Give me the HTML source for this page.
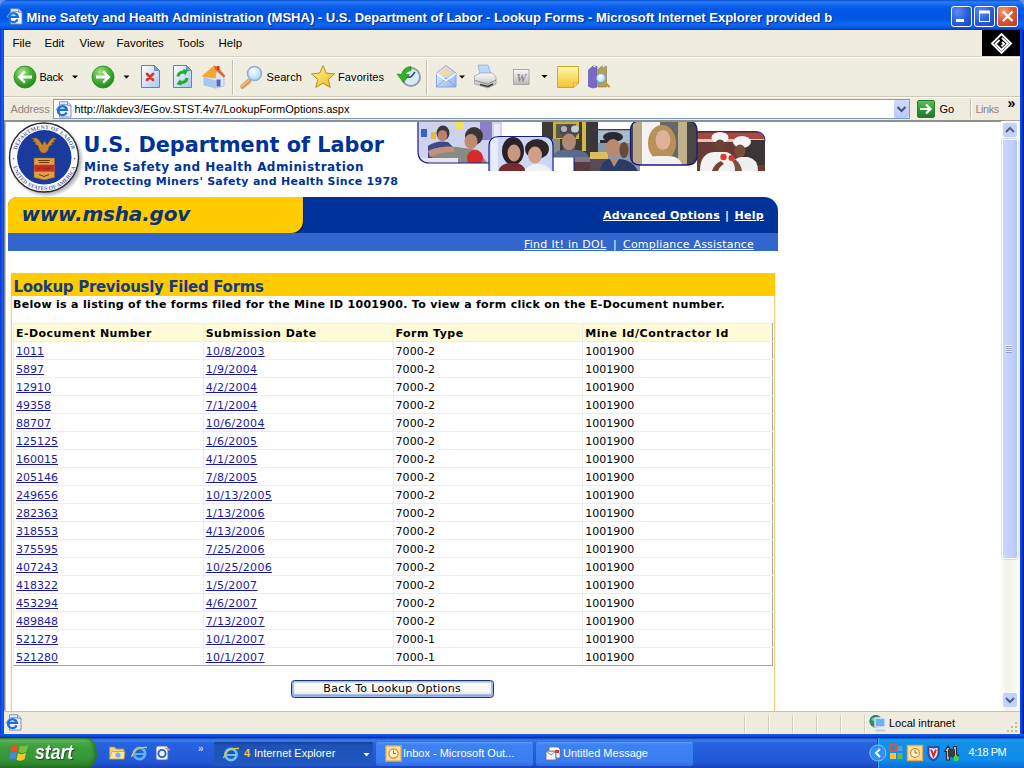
<!DOCTYPE html>
<html lang="en">
<head>
<meta charset="utf-8">
<title>Mine Safety and Health Administration (MSHA) - Lookup Forms</title>
<style>
*{box-sizing:border-box;margin:0;padding:0}
html,body{width:1024px;height:768px;overflow:hidden;background:#6f8fec}
body{position:relative;font-family:"Liberation Sans",sans-serif;font-size:11px;color:#000}
.abs{position:absolute}
/* ---------- window frame ---------- */
#titlebar{left:0;top:0;width:1024px;height:30px;
 background:linear-gradient(180deg,#0a50d0 0,#2c7cf6 2px,#1268f0 5px,#0458e6 9px,#0355e3 18px,#0a68f6 24px,#0a5fe8 27px,#0340c8 29.500px);
 border-radius:7px 7px 0 0}
#title{left:26.5px;top:9.7px;color:#fff;font-weight:bold;font-size:13px;white-space:nowrap;letter-spacing:0;text-shadow:1px 1px 1px #0a2b8c}
.tb svg{position:absolute;left:0;top:0}
.tb{top:6px;width:21px;height:21px;border:1px solid #fff;border-radius:3px;
 background:radial-gradient(circle at 30% 25%,#5c8cf0 0,#2a5fe0 50%,#1a43c4 100%)}
#bclose{background:radial-gradient(circle at 30% 25%,#f0a080 0,#dc5a34 45%,#c03a18 100%)}
#lborder{left:0;top:30px;width:4px;height:708px;background:linear-gradient(90deg,#0831d9 0,#1660e8 50%,#0a48d8 100%)}
#rborder{left:1020px;top:30px;width:4px;height:708px;background:linear-gradient(90deg,#0a48e0 0,#0a3fd0 45%,#00169a 100%)}
#bborder{left:0;top:734px;width:1024px;height:4px;background:linear-gradient(180deg,#1660e8 0,#0a48d8 60%,#0022b4 100%)}
/* ---------- menu ---------- */
#menubar{left:4px;top:30px;width:1016px;height:27px;background:#efecdd;border-bottom:1px solid #d8d2bd}
#menubar span{position:absolute;top:7px;font-size:11.5px;margin-left:-.5px}
#brand{left:982px;top:30px;width:38px;height:26px;background:#000}
/* ---------- toolbar ---------- */
#toolbar{left:4px;top:57px;width:1016px;height:40px;background:#efede0;border-top:1px solid #fff;border-bottom:1px solid #cfcab8}
.tl{top:71px;font-size:11px;white-space:nowrap;letter-spacing:.1px}
.sep{position:absolute;top:5px;width:1px;height:30px;background:#c9c5b2;border-right:1px solid #fff;width:2px}
.dd{position:absolute;width:0;height:0;border-left:3px solid transparent;border-right:3px solid transparent;border-top:3px solid #000}
/* ---------- address ---------- */
#addrbar{left:4px;top:97px;width:1016px;height:24px;background:#efebde;border-top:1px solid #fff;border-bottom:1px solid #a9a799}
#addrlbl{left:10.500px;top:103px;color:#8a8778;font-size:11px;letter-spacing:-.2px}
#addrbox{left:53px;top:99px;width:857px;height:20px;background:#fff;border:1px solid #7f9db9}
#addrtxt{left:74.5px;top:103px;font-size:11px;white-space:nowrap}
/* ---------- content ---------- */
.v{font-family:"DejaVu Sans","Liberation Sans",sans-serif}
.b{font-weight:bold}
#content{left:4px;top:120px;width:1000px;height:591px;background:#fff;overflow:hidden;border-top:2px solid #8e8f8f;border-left:2px solid #c4c4c0}
#cedge{left:4px;top:120px;width:1px;height:590px;background:#84848c}
#content .abs{white-space:nowrap}
/* coordinates inside #content are screen coords minus (6,122) -> use wrapper offsets */
#seal{left:0;top:0}
#h1{left:77.5px;top:11px;font-size:20.8px;color:#003399;letter-spacing:0}
#h2{left:78px;top:38px;font-size:12px;color:#003399;letter-spacing:.44px}
#h3{left:78px;top:53px;font-size:11px;color:#003399;letter-spacing:.27px}
#photos{left:410px;top:-2px}
#navy{left:2px;top:75px;width:770px;height:36px;background:#003399;border-radius:9px 14px 0 0}
#ybar{left:2px;top:75px;width:295px;height:36px;background:#ffcc00;border-radius:9px 0 12px 0;box-shadow:1px 1px 0 #0a1a55}
#www{left:15.5px;top:80px;font-size:20px;font-style:italic;color:#0c3278;letter-spacing:-.2px}
.nav{font-size:11px;color:#fff}
#nav1a{left:597px;top:87px;letter-spacing:.27px}#nav1b{left:719px;top:87px}#nav1c{left:728.5px;top:87px;letter-spacing:.3px}
#lblue{left:2px;top:111px;width:770px;height:18px;background:#3366cc}
#nav2a{left:518px;top:116px;letter-spacing:.27px}#nav2b{left:607px;top:116px}#nav2c{left:617px;top:116px;letter-spacing:.2px}
#ybox{left:5px;top:151px;width:764px;height:460px;border:1px solid #f1cf74;border-top:0;box-shadow:-1px 0 0 #fff4cf,1px 0 0 #fff4cf}
#yband{left:5px;top:151px;width:764px;height:23px;background:#ffcc00}
#yhead{left:7.5px;top:156px;font-size:15px;color:#173a80;letter-spacing:-.3px}
#desc{left:7px;top:176px;font-size:11px;letter-spacing:.31px}
#grid{left:7px;top:201px;width:760px;border-collapse:collapse;font-size:11px;table-layout:fixed;border-right:1px solid #999;border-bottom:1px solid #999}
#grid td,#grid th{height:18px;padding:2px 0 0 2px;text-align:left;border:1px solid #ececec;vertical-align:middle;line-height:14px;letter-spacing:0}
#grid td:nth-child(2){letter-spacing:.28px}#grid td:nth-child(3){letter-spacing:.12px}
#grid th{background:#fffbd6;letter-spacing:.45px}#grid th:nth-child(4){letter-spacing:.56px}
#grid tr:last-child td{border-bottom-color:#a3a3a3}#grid td:last-child,#grid th:last-child{border-right-color:#a4a4ae}
#grid a{color:#1a1aa6;text-decoration:underline}
#backbtn{left:284.500px;top:558px;width:203.500px;height:18px;border:1px solid #17357a;border-radius:3.500px;background:linear-gradient(180deg,#ffffff 0,#f6f6f2 60%,#e6e6de 100%);box-shadow:inset 0 0 0 1.500px #9db9f0,inset 0 -1px 1px 1.500px #6f93e0;text-align:center;font-size:11px;line-height:15px;letter-spacing:.33px}


#addrdd{left:894px;top:100px;width:15px;height:18px;background:linear-gradient(180deg,#cddafd,#b9c9f7);border-radius:2px}
#gobtn{left:917px;top:100px;width:18px;height:18px;border-radius:2px;background:linear-gradient(180deg,#5cc05c 0,#2f9a3a 50%,#1c7a2c 100%);border:1px solid #2a7a34}
#gobtn svg{position:absolute;left:-1px;top:-1px}
#gotxt{left:939.500px;top:103px;font-size:11px}
#linksep{left:970px;top:99px;width:2px;height:20px;border-left:1px solid #c5c1ae;border-right:1px solid #fff}
#linkstxt{left:975.500px;top:103px;font-size:11px;color:#8a8778;letter-spacing:-.5px}
#linkschev{left:1007.500px;top:95px;font-size:14px;font-weight:bold}
.ieico{width:17px;height:17px;z-index:5}
#ieico1{left:6px;top:8px}#ieico2{left:55px;top:100.500px}#ieico3{left:5px;top:714px}
#vscroll{left:1001px;top:121px;width:19px;height:590px;background:linear-gradient(90deg,#fdfdfb,#f2f1ea 30%,#fbfbf8)}
.sbtn{left:2px;width:14px;height:14px;background:#c4d2fb;border-radius:2px;border:0}
#thumb{left:1px;top:18px;width:15.500px;height:420px;border-radius:2px;background:linear-gradient(90deg,#c9d6fc 0,#c1cffa 70%,#b4c4f4 100%);border:1px solid #fff;box-shadow:0 0 0 .5px #b4c2ee}
#thumb i{position:absolute;left:3px;top:205px;width:6px;height:8px;background:repeating-linear-gradient(180deg,#eef2ff 0,#eef2ff 1px,#8ea2d8 1px,#8ea2d8 2px)}
#status i{position:absolute;top:3px;width:2px;height:18px;border-left:1px solid #d2cebc;border-right:1px solid #fff}
#start{left:0;top:0;width:97px;height:30px;border-radius:0 9px 9px 0/0 15px 15px 0;background:linear-gradient(180deg,#2f7a2f 0,#5cb85c 2px,#48a848 5px,#3d9d3d 10px,#389638 20px,#2e862e 26px,#226f24 30px);box-shadow:inset -3px 0 4px -1px #256a25}
#start span{position:absolute;left:34.500px;top:2.500px;color:#fff;font-size:20px;font-weight:bold;font-style:italic;text-shadow:1px 1px 1px #1a4a1a;letter-spacing:0;transform:scaleX(.88);transform-origin:0 0}
.tbtn{top:3.500px;height:24.500px;border-radius:2px;background:linear-gradient(180deg,#5a9af8 0,#3c81f3 3px,#3a7df0 20px,#2f6ae0 24px);color:#fff;font-size:11px;white-space:nowrap}
.tbtn span,.tbtn b{position:absolute;top:5px}
.tbtn.act{background:linear-gradient(180deg,#173f9a 0,#1e52b7 3px,#2058c0 24px)}
#tray{left:877px;top:0;width:147px;height:30px;background:linear-gradient(180deg,#0c5fc0 0,#1a9af6 2px,#1290e8 6px,#0f8cee 22px,#0c6cd0 30px);border-left:1px solid #0a3a9a;box-shadow:inset 1px 0 0 #3ab0ff}
/* ---------- status ---------- */
#status{left:4px;top:711px;width:1016px;height:23px;background:#efebde;border-top:1px solid #c5c2b0}
/* ---------- taskbar ---------- */
#taskbar{left:0;top:738px;width:1024px;height:30px;
 background:linear-gradient(180deg,#1941a5 0,#3a80f3 2px,#2663e0 5px,#245edc 12px,#2258d4 24px,#1a43b8 30px)}
</style>
</head>
<body>
<div id="titlebar" class="abs"></div>
<div id="title" class="abs">Mine Safety and Health Administration (MSHA) - U.S. Department of Labor - Lookup Forms - Microsoft Internet Explorer provided b</div>
<div id="bmin" class="abs tb" style="left:951px"><svg width="19" height="19"><rect x="4" y="12" width="8" height="3" fill="#fff"/></svg></div>
<div id="bmax" class="abs tb" style="left:974px"><svg width="19" height="19"><rect x="4.500" y="5" width="10" height="9.500" fill="none" stroke="#fff" stroke-width="1"/><rect x="4" y="3.500" width="11" height="3" fill="#fff"/></svg></div>
<div id="bclose" class="abs tb" style="left:997px"><svg width="19" height="19"><path d="M5 4.500 l9.500 9.500 M14.500 4.500 l-9.500 9.500" stroke="#fff" stroke-width="2.200"/></svg></div>
<div id="lborder" class="abs"></div>
<div id="rborder" class="abs"></div>
<div id="menubar" class="abs">
 <span style="left:9px">File</span><span style="left:41px">Edit</span><span style="left:76px">View</span><span style="left:113px">Favorites</span><span style="left:174px">Tools</span><span style="left:215px">Help</span>
</div>
<div id="brand" class="abs"><svg width="38" height="26" viewBox="982 30 38 26"><g fill="none" stroke="#fff" stroke-width="1.900"><path d="M1001.500 34 l9.500 9.500 l-9.500 9.500 l-9.500-9.500z"/><path d="M1002 38 l6 5.500 l-6.500 6.500 l-6-6 l4-4"/><path d="M1002 42 l2 1.800 l-2.500 2.500"/></g></svg></div>
<div id="toolbar" class="abs"></div>
<svg id="tbicons" class="abs" style="left:0;top:57px" width="1024" height="40" viewBox="0 57 1024 40">
 <defs>
  <radialGradient id="gGreen" cx="38%" cy="28%" r="75%"><stop offset="0" stop-color="#a4e484"/><stop offset=".5" stop-color="#48b636"/><stop offset="1" stop-color="#22851c"/></radialGradient>
  <linearGradient id="gPage" x1="0" y1="0" x2="1" y2="1"><stop offset="0" stop-color="#ffffff"/><stop offset="1" stop-color="#a9c4f4"/></linearGradient>
  <linearGradient id="gNote" x1="0" y1="0" x2="0" y2="1"><stop offset="0" stop-color="#fff9b0"/><stop offset="1" stop-color="#f6c22a"/></linearGradient>
  <radialGradient id="gGlass" cx="40%" cy="35%" r="70%"><stop offset="0" stop-color="#ffffff"/><stop offset="1" stop-color="#9fd4f2"/></radialGradient>
  <linearGradient id="gStar" x1="0" y1="0" x2="1" y2="1"><stop offset="0" stop-color="#fff6a0"/><stop offset="1" stop-color="#eab81a"/></linearGradient>
  <linearGradient id="gEnv" x1="0" y1="0" x2="1" y2="1"><stop offset="0" stop-color="#f4f8ff"/><stop offset="1" stop-color="#8fb4ec"/></linearGradient>
  <linearGradient id="gGrey" x1="0" y1="0" x2="0" y2="1"><stop offset="0" stop-color="#fafafa"/><stop offset="1" stop-color="#b9b9b9"/></linearGradient>
 </defs>
 <!-- back -->
 <circle cx="25" cy="77" r="11" fill="url(#gGreen)" stroke="#2a8a22" stroke-width=".8"/>
 <path d="M17.500 77 l6.500-6.500 l1.800 1.800 l-3.200 3.200 h9.400 v3 h-9.400 l3.200 3.200 l-1.800 1.800z" fill="#fff"/>
 <path d="M72 75.500 h6 l-3 3z" fill="#000"/>
 <!-- forward -->
 <circle cx="103" cy="77" r="11" fill="url(#gGreen)" stroke="#2a8a22" stroke-width=".8"/>
 <path d="M110.500 77 l-6.500-6.500 l-1.800 1.800 l3.200 3.200 h-9.400 v3 h9.400 l-3.200 3.200 l1.800 1.800z" fill="#fff"/>
 <path d="M123.500 75.500 h6 l-3 3z" fill="#000"/>
 <!-- stop -->
 <path d="M141.500 65.500 h13 l5 5 v17 h-18z" fill="url(#gPage)" stroke="#5f7fc6" stroke-width="1"/>
 <path d="M154.500 65.500 v5 h5z" fill="#7f9fe0" stroke="#5f7fc6" stroke-width=".8"/>
 <path d="M147 74 l6 6 M153 74 l-6 6" stroke="#e2311d" stroke-width="2.800" stroke-linecap="round"/>
 <!-- refresh -->
 <path d="M173.500 65.500 h13 l5 5 v17 h-18z" fill="url(#gPage)" stroke="#5f7fc6" stroke-width="1"/>
 <path d="M186.500 65.500 v5 h5z" fill="#7f9fe0" stroke="#5f7fc6" stroke-width=".8"/>
 <path d="M178 76.500 a4.800 4.800 0 0 1 7.500-3.500" fill="none" stroke="#1fae2a" stroke-width="3"/><path d="M183 69 l5.500 1.200 l-3.500 5z" fill="#1fae2a"/>
 <path d="M187 78 a4.800 4.800 0 0 1 -7.500 3.500" fill="none" stroke="#1fae2a" stroke-width="3"/><path d="M182 85.500 l-5.500-1.200 l3.500-5z" fill="#1fae2a"/>
 <!-- home -->
 <path d="M204 77 l11-8 l9 8 v9 l-8 2 l-12-3z" fill="#dbe8fb" stroke="#9bb4de" stroke-width=".7"/>
 <path d="M204 77 l12 3.500 v8 l-12-3.500z" fill="#a9c6f2"/>
 <path d="M201.500 76.500 l12.500-11 l3.500 1.500 l-2 11.500z" fill="#f2a436"/><path d="M214 65.500 l3.500 1.500 l8 9 l-2 1.500 l-8.500-8z" fill="#e06a2a"/>
 <rect x="217" y="66" width="2.500" height="4" fill="#c8382a"/>
 <rect x="216.500" y="79.500" width="4" height="7" fill="#4f66b6"/>
 <!-- sep -->
 <path d="M232.500 60 v35" stroke="#c5c1ae" stroke-width="1"/><path d="M233.500 60 v35" stroke="#fff" stroke-width="1"/>
 <!-- search -->
 <path d="M249 81 l-6.500 5.500" stroke="#dc9a58" stroke-width="4.600" stroke-linecap="round"/><path d="M249 80 l-7.500 6.500" stroke="#f0c08a" stroke-width="1.400" stroke-linecap="round"/>
 <circle cx="254.500" cy="73.500" r="7" fill="url(#gGlass)" stroke="#8fb0d4" stroke-width="1.600"/>
 <!-- favorites star -->
 <path d="M323 65.500 l3.300 7.600 l8.200.800 l-6.200 5.500 l1.900 8.100 l-7.200-4.300 l-7.200 4.300 l1.900-8.100 l-6.200-5.500 l8.200-.800z" fill="url(#gStar)" stroke="#b8901a" stroke-width="1" stroke-linejoin="round"/>
 <!-- history -->
 <circle cx="411" cy="77" r="9" fill="#d8ecf8" stroke="#9a9aa6" stroke-width="2"/>
 <path d="M411 77 l4-5 M411 77 h-4" stroke="#2a3a6a" stroke-width="1.400"/>
 <path d="M411 66.500 a10.500 10.500 0 0 0 -9.500 8 l-4.500-.5 l6.500 8.500 l6-8 l-4-.3 a6.500 6.500 0 0 1 5.500-3.700z" fill="#35b02a" stroke="#1f8a1a" stroke-width=".7"/>
 <!-- sep -->
 <path d="M426.500 60 v35" stroke="#c5c1ae" stroke-width="1"/><path d="M427.500 60 v35" stroke="#fff" stroke-width="1"/>
 <!-- mail -->
 <path d="M436.500 73 l9.500-7.500 l10 7.500 v14 h-19.500z" fill="url(#gEnv)" stroke="#7f9fd8" stroke-width=".9"/>
 <path d="M438.500 73 l7.500-5.500 l8 5.500 l-8 3z" fill="#f6d6a6"/>
 <path d="M436.500 87 l9.500-9 l10 9" fill="none" stroke="#7f9fd8" stroke-width=".9"/><path d="M436.500 73.500 l9.500 7 l10-7" fill="none" stroke="#ffffff" stroke-width="1.200"/>
 <path d="M459 75.500 h6 l-3 3z" fill="#000"/>
 <!-- print -->
 <path d="M478 65 h10 l3 9 h-11z" fill="#bcd8f8" stroke="#8aa8d8" stroke-width=".7"/>
 <path d="M474.500 76 l6-3 h12 l3.500 4 v7 l-8 4 l-13.500-4z" fill="url(#gGrey)" stroke="#9a9a9a" stroke-width=".7"/>
 <path d="M475 80.500 l13 3.500 l8-4" fill="none" stroke="#7a7a7a" stroke-width=".8"/><path d="M480 84.500 l8 2 l5-2.500" stroke="#3a3a3a" stroke-width="1.400" fill="none"/>
 <!-- W -->
 <rect x="513.500" y="69.500" width="15.500" height="15" fill="url(#gGrey)" stroke="#a8a8a8" stroke-width="1"/>
 <text x="521.300" y="81.500" font-family="Liberation Serif,serif" font-style="italic" font-weight="bold" font-size="11.500" text-anchor="middle" fill="#8a8a8a">W</text>
 <path d="M541.500 75 h6 l-3 3z" fill="#000"/>
 <!-- note -->
 <path d="M557.500 66.500 h21 v16.500 l-5 4.500 h-16z" fill="url(#gNote)" stroke="#d2a628" stroke-width="1"/>
 <path d="M578.500 83 h-5 v4.500z" fill="#fbe38a" stroke="#d2a628" stroke-width=".8"/>
 <!-- research books -->
 <path d="M588.500 70 l5-4.500 l3.500 1 v20.500 l-4 1 l-4.500-1.500z" fill="#7a68c8" stroke="#5a4aa0" stroke-width=".6"/>
 <path d="M598 69.500 l4.500-4 l4 1 v20.500 h-8.500z" fill="#b0a25a" stroke="#7e7440" stroke-width=".6"/>
 <path d="M593.500 66 l2 .5 M602.500 66 l2 .5" stroke="#fff" stroke-width="1.600"/>
 <path d="M604.500 82 l4.500 4.500" stroke="#c89a3a" stroke-width="2.400" stroke-linecap="round"/>
 <circle cx="601" cy="78" r="4.600" fill="url(#gGlass)" stroke="#7f9fc8" stroke-width="1.300"/>
</svg>
<div class="abs tl" style="left:39.500px;letter-spacing:-.25px">Back</div><div class="abs tl" style="left:266.500px">Search</div><div class="abs tl" style="left:338px">Favorites</div>
<div id="addrbar" class="abs"></div>
<div id="addrlbl" class="abs">Address</div>
<div id="addrbox" class="abs"></div>
<div id="addrtxt" class="abs">http://lakdev3/EGov.STST.4v7/LookupFormOptions.aspx</div>
<div id="addrdd" class="abs"><svg width="15" height="18" viewBox="0 0 15 18"><path d="M3.500 7 l4 4 l4-4" fill="none" stroke="#3f5382" stroke-width="2"/></svg></div>
<div id="gobtn" class="abs"><svg width="18" height="18" viewBox="0 0 18 18"><path d="M3 9 h10 M9 4.500 l4.500 4.500 l-4.500 4.500" fill="none" stroke="#fff" stroke-width="2.200"/></svg></div>
<div id="gotxt" class="abs">Go</div>
<div id="linksep" class="abs"></div>
<div id="linkstxt" class="abs">Links</div>
<div id="linkschev" class="abs">&raquo;</div>
<div id="ieico1" class="abs ieico"><svg width="17" height="17" viewBox="0 0 17 17"><path d="M4.500 .8 h8 l3.500 3.500 v11.800 h-11.500z" fill="#eef1fb" stroke="#6f86bd" stroke-width=".9"/><path d="M12.500 .8 v3.500 h3.500" fill="#cdd7f2" stroke="#6f86bd" stroke-width=".8"/><path d="M11.600 11.500 a4.500 4.500 0 1 1 .3-2.700 h-8" fill="none" stroke="#1f6fd6" stroke-width="2.300"/><path d="M.8 9.500 q4-8.500 11.500-5.500" fill="none" stroke="#5aa8f2" stroke-width="1.100"/></svg></div>
<div id="ieico2" class="abs ieico"><svg width="17" height="17" viewBox="0 0 17 17"><path d="M4.500 .8 h8 l3.500 3.500 v11.800 h-11.500z" fill="#eef1fb" stroke="#6f86bd" stroke-width=".9"/><path d="M12.500 .8 v3.500 h3.500" fill="#cdd7f2" stroke="#6f86bd" stroke-width=".8"/><path d="M11.600 11.500 a4.500 4.500 0 1 1 .3-2.700 h-8" fill="none" stroke="#1f6fd6" stroke-width="2.300"/><path d="M.8 9.500 q4-8.500 11.500-5.500" fill="none" stroke="#5aa8f2" stroke-width="1.100"/></svg></div>
<div id="ieico3" class="abs ieico"><svg width="17" height="17" viewBox="0 0 17 17"><path d="M4.500 .8 h8 l3.500 3.500 v11.800 h-11.500z" fill="#eef1fb" stroke="#6f86bd" stroke-width=".9"/><path d="M12.500 .8 v3.500 h3.500" fill="#cdd7f2" stroke="#6f86bd" stroke-width=".8"/><path d="M11.600 11.500 a4.500 4.500 0 1 1 .3-2.700 h-8" fill="none" stroke="#1f6fd6" stroke-width="2.300"/><path d="M.8 9.500 q4-8.500 11.500-5.500" fill="none" stroke="#5aa8f2" stroke-width="1.100"/></svg></div>
<div id="content" class="abs">
 <svg id="seal" class="abs" width="80" height="78" viewBox="0 0 80 78">
  <defs>
   <radialGradient id="sh" cx="50%" cy="50%" r="50%"><stop offset="80%" stop-color="#000" stop-opacity=".45"/><stop offset="100%" stop-color="#000" stop-opacity="0"/></radialGradient>
   <path id="arcT" d="M 9.9 35.5 A 28.4 28.4 0 0 1 66.7 35.5"/>
   <path id="arcB" d="M 5.6 35.5 A 32.7 32.7 0 0 0 71 35.5"/>
  </defs>
  <ellipse cx="40.5" cy="38.5" rx="37.5" ry="37" fill="url(#sh)"/>
  <circle cx="38" cy="35.5" r="34.500" fill="#fdfdfd" stroke="#2a2a36" stroke-width="1.400"/>
  <circle cx="38.3" cy="35.3" r="27.2" fill="#1b3a9e"/>
  <text font-family="Liberation Serif,serif" font-size="5.6" font-weight="bold" fill="#5a6aa6" letter-spacing=".25"><textPath href="#arcT" startOffset="50%" text-anchor="middle">DEPARTMENT OF LABOR</textPath></text>
  <text font-family="Liberation Serif,serif" font-size="5.6" font-weight="bold" fill="#5a6aa6" letter-spacing=".1"><textPath href="#arcB" startOffset="50%" text-anchor="middle">UNITED STATES OF AMERICA</textPath></text>
  <circle cx="7.6" cy="36.5" r=".8" fill="#5a6aa6"/><circle cx="68.6" cy="36.5" r=".8" fill="#5a6aa6"/>
  <!-- eagle -->
  <path d="M27 16.5 q3-2 5.5 1 q2 2.5 4 5.5 l1.5-3.5 l1.2 0 l1.5 3.5 q2-3 4-5.500 q2.500-3 5.500-1 q-1 1.500-3 2 q1 .500 1.500 1.500 q-2 .500-3 1 q.500 1 .500 2 q-2 0-3 1.500 q-.500 3-2 5 q-1.500 1.500-3 1.500 l-1.500 0 q-2-.500-3-2.500 q-1-2-1.500-4.500 q-1-1.500-3-1.500 q0-1 .500-2 q-1-.500-3-1 q.500-1 1.500-1.500 q-2-.500-3-2z" fill="#c8862a" stroke="#7a4a16" stroke-width=".5"/>
  <!-- shield -->
  <path d="M28 36 h20.600 v19.500 l-10.300 2.500 l-10.300-2.500z" fill="#e0a040" stroke="#8a5a1a" stroke-width=".5"/>
  <rect x="28.200" y="42.800" width="20.200" height="6.800" fill="#cc2a2a"/>
  <path d="M32 38.500 h12 M33 40.500 h10 M31 46.200 h4 M37 46.200 h8 M33 52.500 l5 2 l5-2" stroke="#6a3a12" stroke-width="1" fill="none"/>
 </svg>
 <div id="h1" class="abs v b">U.S. Department of Labor</div>
 <div id="h2" class="abs v b">Mine Safety and Health Administration</div>
 <div id="h3" class="abs v b">Protecting Miners' Safety and Health Since 1978</div>
 <svg id="photos" class="abs" width="352" height="52" viewBox="416 120 352 52">
  <defs>
   <filter id="pb" x="-5%" y="-5%" width="110%" height="110%"><feGaussianBlur stdDeviation=".7"/></filter>
   <clipPath id="c1"><path d="M418 121 H502 V163 H430 Q418 163 418 151z"/></clipPath>
   <clipPath id="c2"><path d="M489 171 V146 Q489 136.500 499 136.500 H543 Q553 136.500 553 146 V171z"/></clipPath>
   <clipPath id="c3"><path d="M542 121 H597.500 V148 Q597.500 157.500 588 157.500 H542z"/></clipPath>
   <clipPath id="c5"><path d="M590 121 H598 V129.500 H640 V171 H590z"/></clipPath>
   <clipPath id="c6"><path d="M630.500 131 Q630.500 121 640 121 H687 Q697 121 697 131 V155 Q697 165 687 165 H640 Q630.500 165 630.500 155z"/></clipPath>
   <clipPath id="c7"><path d="M697 131.500 H755 Q765 131.500 765 141 V171 H697z"/></clipPath>
  </defs>
  <!-- 1 kids -->
  <g clip-path="url(#c1)"><g filter="url(#pb)">
   <rect x="418" y="121" width="84" height="42" fill="#cfd2ec"/>
   <rect x="421" y="129" width="6" height="8" fill="#3a62c8"/><rect x="431" y="132" width="5" height="7" fill="#e8b83a"/>
   <rect x="455" y="121" width="9" height="8" fill="#f0e060"/><rect x="480" y="122" width="12" height="18" fill="#8a80c8"/>
   <rect x="494" y="124" width="6" height="12" fill="#e8ecf4"/>
   <ellipse cx="443" cy="133" rx="6.500" ry="7.500" fill="#3a3438"/><ellipse cx="442.500" cy="135.500" rx="4.800" ry="5.500" fill="#b8806a"/>
   <path d="M428 146 q8-6 20-4 l6 6 v12 h-26z" fill="#3a4a8a"/>
   <ellipse cx="474" cy="136" rx="9" ry="9" fill="#3e3636"/><ellipse cx="471" cy="141.500" rx="6.500" ry="7.500" fill="#c08a70"/>
   <path d="M430 150 q14-6 34-2 l14 2 l10 14 h-40 q-10-2-18-8z" fill="#8a8a84"/>
   <path d="M428 151 q12-5 26-4 l0 5 q-14 0-24 5z" fill="#c49078"/>
   <circle cx="475" cy="158" r="8" fill="#d42a2a"/>
   <rect x="418" y="158" width="40" height="5" fill="#e8e4ec"/>
  </g></g>
  <path d="M418 121 V151 Q418 163 430 163 H502" fill="none" stroke="#1a1a8c" stroke-width="1.200"/>
  <!-- 3 miner -->
  <g clip-path="url(#c3)"><g filter="url(#pb)">
   <rect x="542" y="121" width="56" height="37" fill="#3c3a34"/>
   <rect x="553" y="121" width="26" height="18" fill="#c8b040"/><rect x="556" y="124" width="20" height="14" fill="#5a5a4a"/>
   <rect x="582" y="121" width="4" height="30" fill="#d0b84a"/>
   <rect x="552" y="139" width="8" height="18" fill="#8a8c8a"/>
   <ellipse cx="569.500" cy="131" rx="10" ry="6.500" fill="#4a4a50"/><ellipse cx="575" cy="129" rx="4" ry="3.500" fill="#c8ccd4"/><ellipse cx="564" cy="129" rx="3" ry="3" fill="#b0b4bc"/>
   <ellipse cx="569" cy="142" rx="7" ry="8.500" fill="#b08a72"/><path d="M562.500 146 q6.500 10 13 0 l-1 6 h-11z" fill="#6a5a4c"/>
   <path d="M553 158 q2-8 10-8 h14 q10 0 12 8z" fill="#5a6a8c"/>
  </g></g>
  <!-- 4 box under miner -->
  <rect x="574" y="157" width="26" height="14" fill="#5a3a40"/><rect x="574" y="157" width="26" height="5" fill="#7a7a84"/>
  <path d="M574 171 V157" stroke="#1a1a8c" stroke-width="1"/>
  <!-- 5 girl with cap -->
  <g clip-path="url(#c5)"><g filter="url(#pb)"><rect x="590" y="129.500" width="50" height="41.500" fill="#8a97aa"/>
  <rect x="590" y="121" width="8" height="36" fill="#3a3638"/>
  <rect x="598" y="131" width="32" height="12" fill="#a8bcd0"/>
  <rect x="590" y="152" width="18" height="7" fill="#d8c060"/><rect x="590" y="159" width="20" height="12" fill="#5a4a58"/>
  <ellipse cx="613" cy="137" rx="10" ry="5" fill="#2a2a30"/><path d="M600 140 h14 v3 h-14z" fill="#2a2a30"/>
  <ellipse cx="613" cy="148" rx="7.500" ry="9" fill="#b88a70"/>
  <ellipse cx="624" cy="150" rx="4.500" ry="8" fill="#6a4a38"/>
  <path d="M600 171 q2-12 12-12 h6 q14 0 20 12z" fill="#2a3a6a"/><path d="M610 159 l4 8 l5-8z" fill="#b88a70"/></g></g>
  <path d="M590 129.500 H631" stroke="#2a3a9c" stroke-width="1"/>
  <!-- 2 two women -->
  <g clip-path="url(#c2)"><g filter="url(#pb)">
   <rect x="489" y="136" width="64" height="36" fill="#cdd6f2"/>
   <rect x="491" y="138" width="7" height="33" fill="#e8ecf8"/>
   <ellipse cx="513" cy="151" rx="11" ry="14" fill="#2a2226"/><ellipse cx="514" cy="153" rx="6.500" ry="8.500" fill="#c89880"/>
   <ellipse cx="537" cy="149" rx="12" ry="10" fill="#2e2628"/><ellipse cx="535" cy="155" rx="7" ry="8.500" fill="#cfa088"/>
   <path d="M498 172 q2-10 16-9 q10 0 12 9z" fill="#7a2a2e"/>
   <path d="M524 172 q4-9 14-8 q10 0 14 8z" fill="#f0f0f4"/>
  </g></g>
  <path d="M489 171 V146 Q489 136.500 499 136.500 H543 Q553 136.500 553 146 V171" fill="none" stroke="#1a1a8c" stroke-width="1.200"/>
  <!-- 7 chefs -->
  <g clip-path="url(#c7)"><g filter="url(#pb)">
   <rect x="697" y="131" width="68" height="40" fill="#6a3a34"/>
   <rect x="697" y="133" width="68" height="6" fill="#a84a40"/><rect x="697" y="139" width="68" height="3" fill="#d8c8b8"/>
   <rect x="740" y="140" width="25" height="25" fill="#3a3434"/>
   <ellipse cx="720" cy="137.500" rx="8.500" ry="5.500" fill="#f4f4f4"/><ellipse cx="720" cy="146" rx="5.500" ry="6.500" fill="#6a4232"/>
   <ellipse cx="742" cy="142" rx="9" ry="6" fill="#f4f4f4"/><ellipse cx="740" cy="151" rx="5.500" ry="6.500" fill="#7a4e3a"/>
   <path d="M700 171 q0-18 14-19 h12 q10 2 12 19z" fill="#f2f2f2"/>
   <path d="M730 171 q2-14 12-14 h6 q10 2 10 14z" fill="#eeeeee"/>
   <path d="M712 171 q2-7 9-10 l3 3 q-5 3-6 7z" fill="#6e4636"/><path d="M735 171 q0-7 -3-10 l3-2 q6 5 7 12z" fill="#7a5240"/>
   <circle cx="723.500" cy="157" r="3.200" fill="#e03a2a"/><circle cx="731.500" cy="158" r="3" fill="#d83428"/>
  </g></g>
  <path d="M697 131.500 H755 Q765 131.500 765 141" fill="none" stroke="#2a2a9c" stroke-width="1"/>
  <!-- 6 blonde woman -->
  <g clip-path="url(#c6)"><g filter="url(#pb)">
   <rect x="630" y="121" width="67" height="44" fill="#4a4644"/>
   <rect x="633" y="121" width="9" height="44" fill="#b8a888"/><rect x="642" y="121" width="20" height="44" fill="#f4f2ee"/>
   <rect x="678" y="121" width="9" height="44" fill="#c0b090"/><rect x="660" y="121" width="18" height="44" fill="#6a6660"/>
   <ellipse cx="662" cy="143" rx="14" ry="18" fill="#b8905a"/>
   <ellipse cx="663" cy="140" rx="7.500" ry="10" fill="#e0b098"/>
   <path d="M644 165 q2-9 14-9 h10 q12 0 14 9z" fill="#f4f2f0"/>
  </g></g>
  <path d="M630.500 131 Q630.500 121 640 121 H687 Q697 121 697 131 V155 Q697 165 687 165 H640 Q630.500 165 630.500 155z" fill="none" stroke="#1a1a7c" stroke-width="1.300"/>
 </svg>
 <div id="navy" class="abs"></div>
 <div id="ybar" class="abs"></div>
 <div id="www" class="abs v b">www.msha.gov</div>
 <div id="nav1a" class="abs v b nav"><u>Advanced Options</u></div><div id="nav1b" class="abs v b nav">|</div><div id="nav1c" class="abs v b nav"><u>Help</u></div>
 <div id="lblue" class="abs"></div>
 <div id="nav2a" class="abs v nav"><u>Find It! in DOL</u></div><div id="nav2b" class="abs v nav">|</div><div id="nav2c" class="abs v nav"><u>Compliance Assistance</u></div>
 <div id="ybox" class="abs"></div><div id="yband" class="abs"></div>
 <div id="yhead" class="abs v b">Lookup Previously Filed Forms</div>
 <div id="desc" class="abs v b">Below is a listing of the forms filed for the Mine ID 1001900. To view a form click on the E-Document number.</div>
 <table id="grid" class="abs v" cellspacing="0">
  <tr class="hd"><th>E-Document Number</th><th>Submission Date</th><th>Form Type</th><th>Mine Id/Contractor Id</th></tr>
  <tr><td><a>1011</a></td><td><a>10/8/2003</a></td><td>7000-2</td><td>1001900</td></tr>
  <tr><td><a>5897</a></td><td><a>1/9/2004</a></td><td>7000-2</td><td>1001900</td></tr>
  <tr><td><a>12910</a></td><td><a>4/2/2004</a></td><td>7000-2</td><td>1001900</td></tr>
  <tr><td><a>49358</a></td><td><a>7/1/2004</a></td><td>7000-2</td><td>1001900</td></tr>
  <tr><td><a>88707</a></td><td><a>10/6/2004</a></td><td>7000-2</td><td>1001900</td></tr>
  <tr><td><a>125125</a></td><td><a>1/6/2005</a></td><td>7000-2</td><td>1001900</td></tr>
  <tr><td><a>160015</a></td><td><a>4/1/2005</a></td><td>7000-2</td><td>1001900</td></tr>
  <tr><td><a>205146</a></td><td><a>7/8/2005</a></td><td>7000-2</td><td>1001900</td></tr>
  <tr><td><a>249656</a></td><td><a>10/13/2005</a></td><td>7000-2</td><td>1001900</td></tr>
  <tr><td><a>282363</a></td><td><a>1/13/2006</a></td><td>7000-2</td><td>1001900</td></tr>
  <tr><td><a>318553</a></td><td><a>4/13/2006</a></td><td>7000-2</td><td>1001900</td></tr>
  <tr><td><a>375595</a></td><td><a>7/25/2006</a></td><td>7000-2</td><td>1001900</td></tr>
  <tr><td><a>407243</a></td><td><a>10/25/2006</a></td><td>7000-2</td><td>1001900</td></tr>
  <tr><td><a>418322</a></td><td><a>1/5/2007</a></td><td>7000-2</td><td>1001900</td></tr>
  <tr><td><a>453294</a></td><td><a>4/6/2007</a></td><td>7000-2</td><td>1001900</td></tr>
  <tr><td><a>489848</a></td><td><a>7/13/2007</a></td><td>7000-2</td><td>1001900</td></tr>
  <tr><td><a>521279</a></td><td><a>10/1/2007</a></td><td>7000-1</td><td>1001900</td></tr>
  <tr><td><a>521280</a></td><td><a>10/1/2007</a></td><td>7000-1</td><td>1001900</td></tr>
 </table>
 <div id="backbtn" class="abs v">Back To Lookup Options</div>
</div>
<div id="cedge" class="abs"></div>
<div id="vscroll" class="abs">
 <div class="abs sbtn" style="top:2px"><svg width="14" height="14" viewBox="0 0 14 14"><path d="M3 9 l4-4 l4 4" fill="none" stroke="#4d6185" stroke-width="2"/></svg></div>
 <div id="thumb" class="abs"><i></i></div>
 <div class="abs sbtn" style="top:572px"><svg width="14" height="14" viewBox="0 0 14 14"><path d="M3 5 l4 4 l4-4" fill="none" stroke="#4d6185" stroke-width="2"/></svg></div>
</div>
<div id="status" class="abs">
 <i style="left:740px"></i><i style="left:764px"></i><i style="left:788px"></i><i style="left:812px"></i><i style="left:836px"></i><i style="left:860px"></i>
 <svg class="abs" style="left:864px;top:2px" width="19" height="19" viewBox="0 0 19 19"><circle cx="7.500" cy="7" r="6" fill="#2f8f6a"/><path d="M3 5 q3-3 6-1 q-1 3-4 3z" fill="#6ad07a"/><circle cx="8" cy="7.500" r="6" fill="none" stroke="#1f5f8a" stroke-width=".6"/><rect x="7" y="4" width="10" height="9" rx="1" fill="#6ab4f4" stroke="#dfe6f4" stroke-width="1.400"/><path d="M8 15.500 h9 l1 2 h-11z" fill="#c8ccd8"/></svg>
 <span class="abs" style="left:885px;top:5px;font-size:11px;white-space:nowrap">Local intranet</span>
 <svg class="abs" style="left:1003px;top:10px" width="12" height="12" viewBox="0 0 12 12"><g fill="#c8b8a0"><rect x="8" y="0" width="2" height="2"/><rect x="4" y="4" width="2" height="2"/><rect x="8" y="4" width="2" height="2"/><rect x="0" y="8" width="2" height="2"/><rect x="4" y="8" width="2" height="2"/><rect x="8" y="8" width="2" height="2"/></g></svg>
</div>
<div id="bborder" class="abs"></div>
<div id="taskbar" class="abs">
 <div id="start" class="abs"><svg class="abs" style="left:10px;top:5px" width="20" height="19" viewBox="0 0 20 19"><path d="M1.500 3 q3.500-2.500 7-1 l-1.500 6.500 q-3.500-1.500-7 1z" fill="#e8532a"/><path d="M10 2.500 q4 2 8-0.500 l-1.500 6.500 q-4 2.500-8 0.500z" fill="#7ac142"/><path d="M-.2 10.800 q3.500-2.500 7-1 l-1.500 6.500 q-3.500-1.500-7 1z" fill="#3a8af0"/><path d="M8 10.300 q4 2 8-0.500 l-1.500 6.500 q-4 2.500-8 0.500z" fill="#f8c82a"/></svg><span>start</span></div>
 <svg class="abs" style="left:100px;top:3px" width="112" height="26" viewBox="100 741 112 26">
  <path d="M109.500 747 h5 l2 2 h7.500 v10 h-14.500z" fill="#f4d27a" stroke="#b88a2a" stroke-width=".8"/><path d="M109.500 759 l2.500-7.500 h13 l-1 7.500z" fill="#fbe6a0" stroke="#b88a2a" stroke-width=".6"/><circle cx="118" cy="755" r="2.600" fill="#7ab0e8"/>
  <circle cx="139.500" cy="753.500" r="5.600" fill="none" stroke="#5ab4f4" stroke-width="2.600"/><path d="M134 754 h10" stroke="#5ab4f4" stroke-width="2"/><path d="M131.500 757 q3-11 15.500-9.500" fill="none" stroke="#f0c83a" stroke-width="1.300"/>
  <rect x="156" y="746" width="12" height="14" rx="2" fill="#eef2fa" stroke="#4a6ab0" stroke-width=".9"/><circle cx="162" cy="753.500" r="3.600" fill="none" stroke="#2a5ac8" stroke-width="1.800"/><path d="M165 748 l5 2" stroke="#e8a03a" stroke-width="1.600"/>
  <text x="198" y="752" font-family="Liberation Sans,sans-serif" font-size="10" font-weight="bold" fill="#bcd4fa">&#187;</text>
 </svg>
 <div class="abs tbtn act" style="left:214px;width:159px"><svg class="abs" style="left:8px;top:3px" width="18" height="18" viewBox="0 0 18 18"><circle cx="9" cy="9.500" r="5.600" fill="none" stroke="#6ac0f8" stroke-width="2.600"/><path d="M4 10 h10" stroke="#6ac0f8" stroke-width="2"/><path d="M1.500 13 q3-11 15.500-9.500" fill="none" stroke="#f0c83a" stroke-width="1.300"/></svg><b style="color:#f6c24a;left:30px">4</b><span style="left:40px">Internet Explorer</span><svg class="abs" style="left:149px;top:10px" width="8" height="6"><path d="M0.500 1 h6 l-3 3.500z" fill="#fff"/></svg></div>
 <div class="abs tbtn" style="left:376px;width:157px"><svg class="abs" style="left:9px;top:3px" width="17" height="17" viewBox="0 0 17 17"><rect x=".7" y=".7" width="15.500" height="15.500" fill="#fbe3a2" stroke="#e29a2a" stroke-width="1.400"/><circle cx="8.500" cy="8.500" r="4.600" fill="#fff6d8" stroke="#d8821a" stroke-width="1.200"/><path d="M8.500 5.500 v3 h2.500" fill="none" stroke="#a85a10" stroke-width="1"/></svg><span style="left:27px">Inbox - Microsoft Out...</span></div>
 <div class="abs tbtn" style="left:536px;width:157px"><svg class="abs" style="left:8px;top:3px" width="18" height="17" viewBox="0 0 18 17"><path d="M2 6 h10 v9 h-10z" fill="#f4f4f8" stroke="#6a6a7a" stroke-width=".8"/><path d="M5 2 h9 l2 2 v9 h-4 v-7 h-7z" fill="#fff" stroke="#6a6a7a" stroke-width=".8"/><path d="M2 6 l5 4 l5-4" fill="none" stroke="#6a6a7a" stroke-width=".8"/><rect x="11" y="5" width="4" height="3" fill="#d83a2a"/></svg><span style="left:27px">Untitled Message</span></div>
 <div id="tray" class="abs">
  <svg class="abs" style="left:-10px;top:2px" width="100" height="26" viewBox="867 740 100 26">
   <circle cx="876.800" cy="753" r="8" fill="#2f8ff4" stroke="#7fc4fb" stroke-width="1"/><path d="M879 749 l-4 4 l4 4" fill="none" stroke="#fff" stroke-width="2"/>
   <rect x="889" y="745" width="6" height="6" fill="none" stroke="#e8532a" stroke-width="1.800"/><rect x="896.500" y="746" width="5" height="5" fill="#5a9ae8"/><rect x="889" y="753" width="6" height="6" fill="#f4c83a"/><rect x="896.500" y="753" width="5" height="6" fill="#6ab44a"/>
   <rect x="906.500" y="745.500" width="15" height="15" fill="#fbe3a2" stroke="#f0a83a" stroke-width="1.400"/><circle cx="914" cy="753" r="4.400" fill="#fff6d8" stroke="#d8821a" stroke-width="1.100"/><path d="M914 750 v3 h2.500" fill="none" stroke="#a85a10" stroke-width="1"/>
   <path d="M926.500 745.500 q6 2 12 0 v8.500 q-1 5.500-6 7.500 q-5-2-6-7.500z" fill="#2c4aa6"/><path d="M928.500 747.800 q4 1.200 8 0 v6 q-.8 4-4 5.500 q-3.200-1.500-4-5.500z" fill="#f4f4fa"/><path d="M930 749.500 l2.500 6.500 l2.500-6.500" fill="none" stroke="#d8241a" stroke-width="2"/>
   <path d="M943.500 751.500 l3.500-5.500 l3.500 5.500 h-2 v8.500 h-3 v-8.500z M950.500 755 h2 v-8.500 h3 v8.500 h2 l-3.500 5.500z" fill="#c8c8c8" stroke="#2a2a2a" stroke-width="1.200"/><rect x="947" y="749" width="7" height="8" rx="1" fill="#3a3a40"/><circle cx="955" cy="758.500" r="2.800" fill="#3ad83a"/>
  </svg>
  <span class="abs" style="left:90.500px;top:8px;font-size:11px;color:#fff;white-space:nowrap;letter-spacing:-.45px">4:18 PM</span>
 </div>
</div>
</body>
</html>
